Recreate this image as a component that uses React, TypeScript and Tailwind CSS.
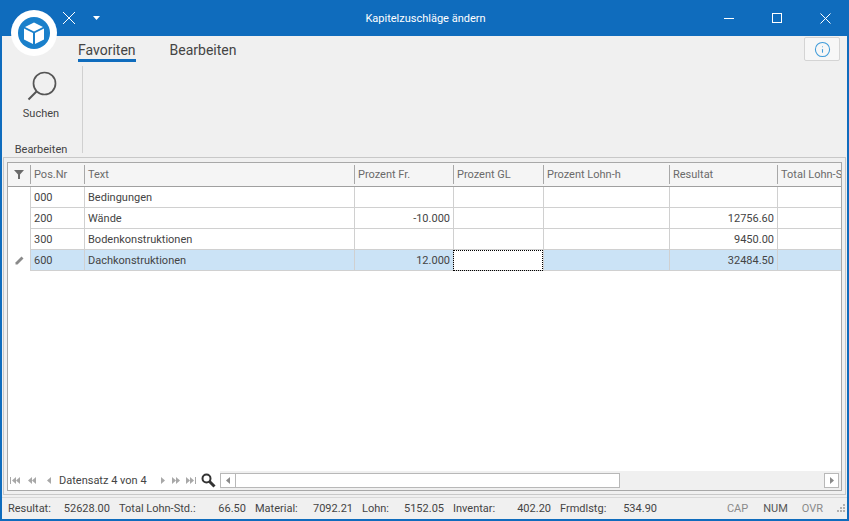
import React from 'react'
import { Info } from 'lucide-react'

const font = "[font-family:Roboto,Tahoma,sans-serif]"

const columns = [
    { name: 'Pos.Nr', width: 'w-[54px]', right: false },
    { name: 'Text', width: 'w-[270px]', right: false },
    { name: 'Prozent Fr.', width: 'w-[99px]', right: true },
    { name: 'Prozent GL', width: 'w-[90px]', right: true },
    { name: 'Prozent Lohn-h', width: 'w-[126px]', right: true },
    { name: 'Resultat', width: 'w-[108px]', right: true },
    { name: 'Total Lohn-S', width: 'w-[64px]', right: true },
]

const rows = [
    ['000', 'Bedingungen', '', '', '', '', ''],
    ['200', 'Wände', '-10.000', '', '', '12756.60', ''],
    ['300', 'Bodenkonstruktionen', '', '', '', '9450.00', ''],
    ['600', 'Dachkonstruktionen', '12.000', '', '', '32484.50', ''],
]

const totals = [
    { label: 'Resultat:', value: '52628.00', width: 'w-[102px]' },
    { label: 'Total Lohn-Std.:', value: '66.50', width: 'w-[127px]' },
    { label: 'Material:', value: '7092.21', width: 'w-[98px]' },
    { label: 'Lohn:', value: '5152.05', width: 'w-[82px]' },
    { label: 'Inventar:', value: '402.20', width: 'w-[98px]' },
    { label: 'Frmdlstg:', value: '534.90', width: 'w-[97px]' },
]

const NavIcon = ({ path, bar }: { path: string[]; bar?: 'left' | 'right' }) => (
    <svg width="11" height="7" viewBox="0 0 11 7" fill="#a8a8a8" className="shrink-0">
        {bar === 'left' && <rect x="0" y="0" width="1" height="7" />}
        {path.map((d, i) => <path key={i} d={d} />)}
        {bar === 'right' && <rect x="10" y="0" width="1" height="7" />}
    </svg>
)

const Logo = () => (
    <div className="absolute left-[11px] top-[10px] w-[46px] h-[46px] rounded-full bg-white flex items-center justify-center z-10">
        <div className="w-[32px] h-[32px] rounded-full bg-[#1a80cb] flex items-center justify-center">
            <svg width="24" height="24" viewBox="0 0 24 24" fill="none">
                <path d="M12 1.5 L21 6 L12 10.5 L3 6 Z" fill="white" />
                <path d="M2 7.5 L11 12 L11 23 L2 18.5 Z" fill="white" />
                <path d="M22 7.5 L13 12 L13 23 L22 18.5 Z" fill="white" />
            </svg>
        </div>
    </div>
)

export default function App() {
    return (
        <div className={`relative w-[849px] h-[521px] overflow-hidden bg-[#0f6cbd] px-[2px] pb-[2px] flex flex-col text-[11px] leading-none text-[#444] ${font}`}>
            <Logo />
            {/* title bar */}
            <div className="h-[36px] shrink-0 flex items-center text-white relative -mx-[2px]">
                <div className="w-[62px]" />
                <svg width="14" height="14" viewBox="0 0 14 14" stroke="white" strokeWidth="1" className="mb-[1px]"><path d="M1 1 L13 13 M13 1 L1 13" /></svg>
                <svg width="7" height="4" viewBox="0 0 7 4" fill="white" className="ml-[17px] mb-[1px]"><path d="M0 0 H7 L3.5 4 Z" /></svg>
                <div className="flex-1 text-center pl-[27px]">Kapitelzuschläge ändern</div>
                <div className="w-[10px] h-[1px] bg-white mr-[38px]" />
                <div className="w-[10px] h-[10px] border border-white mr-[38px]" />
                <svg width="11" height="11" viewBox="0 0 11 11" stroke="white" strokeWidth="1" className="mr-[18px]"><path d="M0.5 0.5 L10.5 10.5 M10.5 0.5 L0.5 10.5" /></svg>
            </div>

            {/* ribbon */}
            <div className="flex-1 flex flex-col bg-[#f0f0f0] min-h-0">
                <div className="h-[28px] shrink-0 flex items-start pl-[76px]">
                    <div className="pt-[7px] h-[26px] border-b-[3px] border-[#0f6cbd] text-[14px]">Favoriten</div>
                    <div className="pt-[7px] ml-[34px] text-[14px]">Bearbeiten</div>
                    <div className="ml-auto mt-[1px] mr-[7px] w-[36px] h-[24px] bg-[#f7f7f7] border border-[#d4d4d4] rounded-[2px] flex items-center justify-center">
                        <Info size={17} strokeWidth={1.5} className="text-[#3f9bd9]" />
                    </div>
                </div>
                <div className="h-[93px] shrink-0 flex">
                    <div className="w-[78px] flex flex-col items-center">
                        <svg width="34" height="34" viewBox="0 0 34 34" fill="none" stroke="#555" strokeWidth="1.7" className="mt-[6px] ml-[2px]">
                            <circle cx="19.5" cy="13.5" r="11" />
                            <path d="M11.5 21.5 L3.5 29.5" strokeWidth="2" />
                        </svg>
                        <div className="mt-[4px]">Suchen</div>
                        <div className="mt-auto mb-[2px]">Bearbeiten</div>
                    </div>
                    <div className="w-[1px] h-[87px] ml-[2px] bg-[#d0d0d0] mt-[2px]" />
                </div>

                {/* outer frame */}
                <div className="mx-[1px] flex-1 min-h-0 border border-[#c8c8c8] pt-[4px] px-[3px] pb-[3px] flex flex-col">
                    <div className="flex-1 min-h-0 border border-[#a8a8a8] bg-white flex flex-col overflow-hidden">
                        <div className="h-[24px] shrink-0 flex bg-[#f5f5f5] border-b border-[#a0a0a0] text-[#6a6a6a]">
                            <div className="w-[22px] shrink-0 flex items-center justify-center">
                                <svg width="10" height="9" viewBox="0 0 10 9" fill="#6b6b6b"><path d="M0 0 H10 L6 4.5 V9 L4 9 V4.5 Z" /></svg>
                            </div>
                            {columns.map((col) => (
                                <div key={col.name} className={`${col.width} shrink-0 flex items-center pl-[4px] whitespace-nowrap overflow-hidden relative before:absolute before:left-0 before:top-[2px] before:bottom-[2px] before:w-[1px] before:bg-[#a8a8a8]`}>{col.name}</div>
                            ))}
                        </div>
                        {rows.map((row, r) => (
                            <div key={row[0]} className="h-[21px] shrink-0 flex">
                                <div className="w-[22px] shrink-0 flex items-center justify-center">
                                    {r === 3 && (
                                        <svg width="9" height="9" viewBox="0 0 9 9" fill="#8a8a8a"><path d="M6.5 0.5 L8.5 2.5 L2.5 8.5 L0.5 8.5 L0.5 6.5 Z" /></svg>
                                    )}
                                </div>
                                {columns.map((col, c) => {
                                    const active = r === 3 && c === 3
                                    return (
                                        <div key={col.name} className={`${col.width} shrink-0 flex items-center px-[3px] border-l border-b border-[#d0d0d0] whitespace-nowrap ${col.right ? 'justify-end' : ''} ${active ? 'bg-white outline-1 outline-dotted outline-black -outline-offset-1' : r === 3 ? 'bg-[#cbe3f6]' : ''}`}>
                                            {row[c]}
                                        </div>
                                    )
                                })}
                            </div>
                        ))}
                        <div className="flex-1 min-h-0" />
                        {/* navigator + scrollbar */}
                        <div className="h-[19px] shrink-0 flex items-center bg-[#f0f0f0] pr-[2px]">
                            <div className="w-[212px] shrink-0 flex items-center pl-[2px] bg-white h-full">
                                <NavIcon bar="left" path={['M6 0 L2 3.5 L6 7 Z', 'M10 0 L6 3.5 L10 7 Z']} />
                                <div className="ml-[6px]"><NavIcon path={['M5 0 L1 3.5 L5 7 Z', 'M9 0 L5 3.5 L9 7 Z']} /></div>
                                <div className="ml-[6px]"><NavIcon path={['M7 0 L3 3.5 L7 7 Z']} /></div>
                                <span className="ml-[4px] mr-[1px] whitespace-nowrap">Datensatz 4 von 4</span>
                                <div className="ml-[9px]"><NavIcon path={['M4 0 L8 3.5 L4 7 Z']} /></div>
                                <div className="ml-[2px]"><NavIcon path={['M2 0 L6 3.5 L2 7 Z', 'M6 0 L10 3.5 L6 7 Z']} /></div>
                                <div className="ml-[4px]"><NavIcon bar="right" path={['M1 0 L5 3.5 L1 7 Z', 'M5 0 L9 3.5 L5 7 Z']} /></div>
                                <svg width="15" height="15" viewBox="0 0 15 15" fill="none" stroke="#333" className="shrink-0 ml-[5px]">
                                    <circle cx="5.5" cy="5.5" r="4" strokeWidth="2" />
                                    <path d="M8.5 8.5 L13.5 13.5" strokeWidth="3" />
                                </svg>
                            </div>
                            <div className="w-[16px] h-[15px] shrink-0 bg-white border border-[#b8b8b8] flex items-center justify-center">
                                <svg width="4" height="7" viewBox="0 0 4 7" fill="#8a8a8a"><path d="M4 0 L0 3.5 L4 7 Z" /></svg>
                            </div>
                            <div className="w-[384px] h-[15px] shrink-0 bg-white border border-[#b8b8b8] border-l-0" />
                            <div className="flex-1" />
                            <div className="w-[15px] h-[15px] shrink-0 bg-white border border-[#b8b8b8] flex items-center justify-center">
                                <svg width="4" height="7" viewBox="0 0 4 7" fill="#8a8a8a"><path d="M0 0 L4 3.5 L0 7 Z" /></svg>
                            </div>
                        </div>
                    </div>
                </div>

                {/* status bar */}
                <div className="h-[22px] shrink-0 mt-[2px] border-t border-[#d8d8d8] flex items-center pl-[6px] pr-[1px] gap-[9px]">
                    {totals.map((t) => (
                        <div key={t.label} className={`${t.width} shrink-0 flex justify-between whitespace-nowrap`}>
                            <span>{t.label}</span>
                            <span>{t.value}</span>
                        </div>
                    ))}
                    <div className="ml-auto flex items-center">
                        <span className="text-[#8a8a8a]">CAP</span>
                        <span className="ml-[15px] text-[#555]">NUM</span>
                        <span className="ml-[14px] text-[#8a8a8a]">OVR</span>
                        <svg width="11" height="11" viewBox="0 0 11 11" fill="#b0b0b0" className="ml-[12px]">
                            <rect x="8" y="1" width="2" height="2" /><rect x="5" y="4" width="2" height="2" /><rect x="8" y="4" width="2" height="2" />
                            <rect x="2" y="7" width="2" height="2" /><rect x="5" y="7" width="2" height="2" /><rect x="8" y="7" width="2" height="2" />
                        </svg>
                    </div>
                </div>
            </div>
        </div>
    )
}
